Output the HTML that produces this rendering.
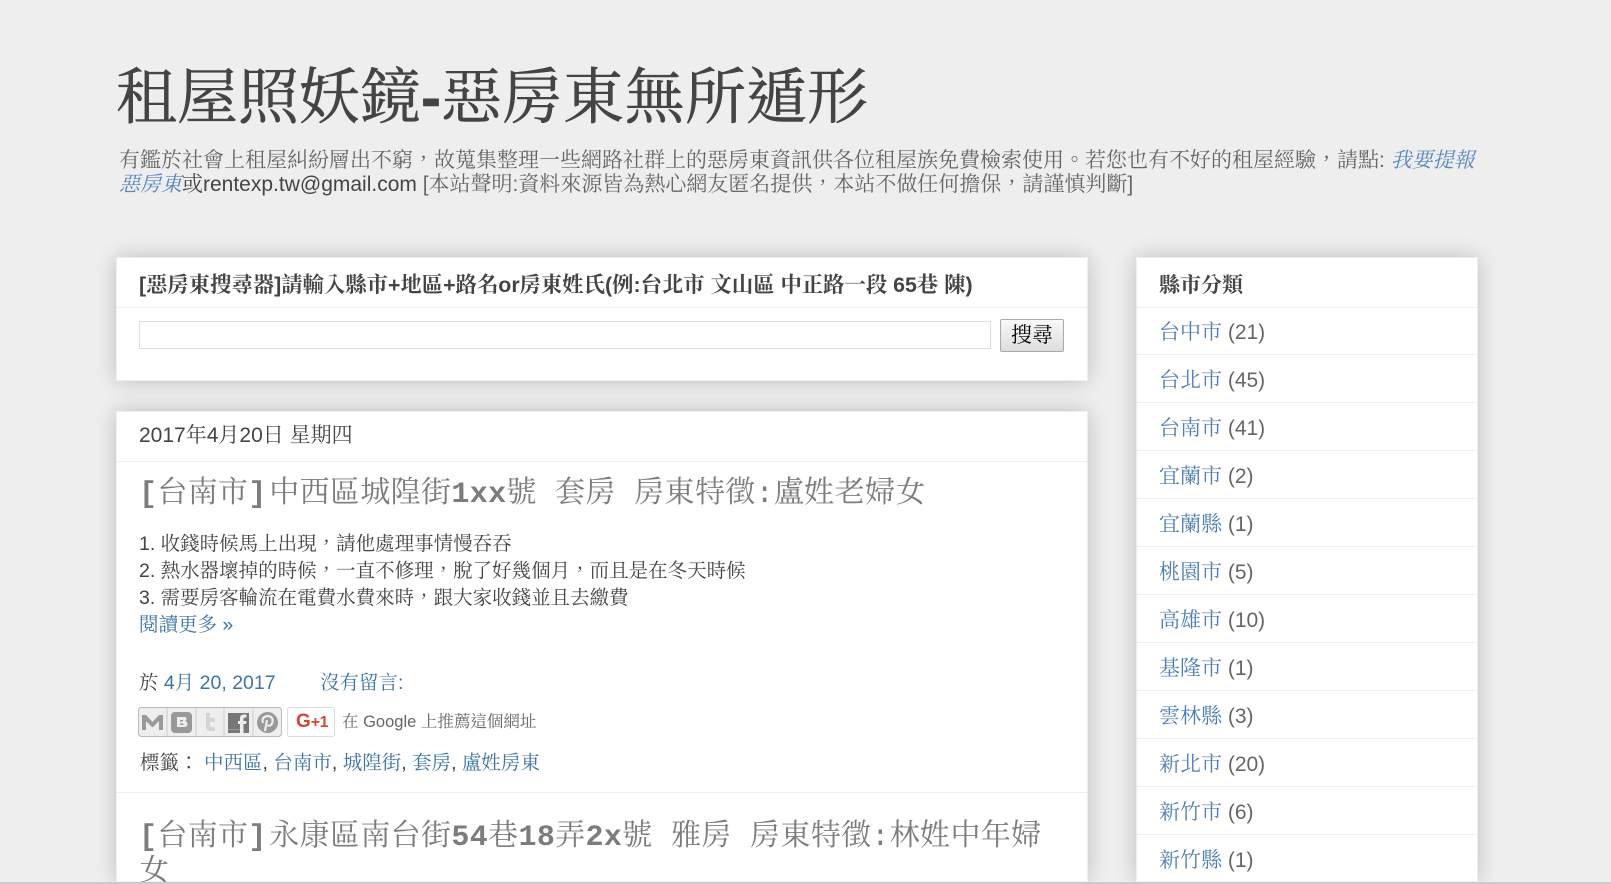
<!DOCTYPE html>
<html lang="zh-Hant"><head><meta charset="utf-8"><title>租屋照妖鏡-惡房東無所遁形</title>
<style>
html,body{margin:0;padding:0;background:#eee;width:1611px;height:884px;overflow:hidden}
#w{width:1611px;height:884px;overflow:hidden;position:relative;font-family:"Liberation Sans","Noto Serif CJK SC",serif;color:#444}
.t{position:absolute;white-space:pre;line-height:30px;height:30px;font-size:19.5px}
.card{position:absolute;background:#fff;box-shadow:0 0 20px rgba(0,0,0,.2);border:1px solid #eee;box-sizing:border-box}
.hr{position:absolute;height:1px;background:#eee}
a{color:#3d74a5;text-decoration:none}
.side{color:#666;font-size:21px}.side a{color:#4f7db5}
.pt{font-family:"Liberation Mono","Noto Serif CJK SC",monospace;font-size:30px;line-height:36px;height:36px;color:#7c7c7c;font-weight:normal;letter-spacing:.35px}
.pt b{font-weight:bold}
.pt i{display:inline-block;width:2.500px}
</style></head><body><div id="w">
<div class="t" style="left:116px;top:57px;height:80px;line-height:80px;font-size:61px;color:#444;-webkit-text-stroke:.5px #444">租屋照妖鏡<b style="font-size:60px">-</b>惡房東無所遁形</div>
<div class="t" style="left:119px;top:149px;height:24px;line-height:24px;color:#666;font-size:21px">有鑑於社會上租屋糾紛層出不窮，故蒐集整理一些網路社群上的惡房東資訊供各位租屋族免費檢索使用。若您也有不好的租屋經驗，請點: <a href="#" style="color:#5a86c0;font-style:italic">我要提報</a></div>
<div class="t" style="left:119px;top:173px;height:24px;line-height:24px;color:#666;font-size:21px"><a href="#" style="color:#5a86c0;font-style:italic">惡房東</a><span style="color:#444">或rentexp.tw@gmail.com</span> [本站聲明:資料來源皆為熱心網友匿名提供，本站不做任何擔保，請謹慎判斷]</div>

<div class="card" style="left:116px;top:257px;width:972px;height:124px"></div>
<div class="hr" style="left:117px;top:307px;width:970px"></div>
<div class="t" style="left:139px;top:270px;font-size:21.350px;font-weight:bold;color:#444">[惡房東搜尋器]請輸入縣市+地區+路名or房東姓氏(例:台北市 文山區 中正路一段 65巷 陳)</div>
<div style="position:absolute;left:139px;top:321px;width:852px;height:28px;box-sizing:border-box;border:1px solid #ddd;background:#fff"></div>
<div style="position:absolute;left:1000px;top:319px;width:64px;height:33px;box-sizing:border-box;border:1px solid #aaa;border-radius:2px;background:linear-gradient(#f8f8f8,#ddd);color:#000;font-size:21px;line-height:31px;text-align:center">搜尋</div>

<div class="card" style="left:116px;top:411px;width:972px;height:471px"></div>
<div class="hr" style="left:117px;top:461px;width:970px"></div>
<div class="t" style="left:139px;top:421px;color:#444;font-size:21px">2017年4月20日 星期四</div>
<div class="t pt" style="left:139px;top:477px"><b>[</b>台南市<b>]</b><i></i>中西區城隍街<b>1xx</b>號 套房 房東特徵:盧姓老婦女</div>
<div class="t" style="left:139px;top:529px">1. 收錢時候馬上出現，請他處理事情慢吞吞</div>
<div class="t" style="left:139px;top:556px">2. 熱水器壞掉的時候，一直不修理，脫了好幾個月，而且是在冬天時候</div>
<div class="t" style="left:139px;top:583px">3. 需要房客輪流在電費水費來時，跟大家收錢並且去繳費</div>
<div class="t" style="left:139px;top:610px"><a href="#">閱讀更多 »</a></div>
<div class="t" style="left:139px;top:668px">於 <a href="#">4月 20, 2017</a></div>
<div class="t" style="left:320px;top:668px"><a href="#">沒有留言:</a></div>

<svg style="position:absolute;left:138px;top:707px" width="198" height="31" viewBox="0 0 198 31">
<rect x=".5" y=".5" width="143" height="29" rx="3" fill="#eee" stroke="#bbb"/>
<path d="M29 1V29M58 1V29M86 1V29M115 1V29" stroke="#ccc" stroke-width="1"/>
<path d="M4 23V8H8L14.500 15 21 8H25V23H21V14L14.500 20.500 8 14V23Z" fill="#999"/>
<rect x="33" y="5" width="21" height="21" rx="4" fill="#999"/><path d="M39 10h7a2 2 0 0 1 1 4 2.500 2.500 0 0 1-1 6h-7Zm3 3v1.500h3v-1.500Zm0 3.500v1.500h3.500v-1.500Z" fill="#eee"/>
<path d="M68 6h4v5h5v4h-5v3q0 3 5 2v4q-9 1.500-9-5Z" fill="#d4d4d4"/>
<rect x="90" y="6" width="21" height="20" fill="#777"/><path d="M102 26V17h-2v-3h2v-3q0-3.500 4-3.500h2.500v3H107q-1.500 0-1.500 1v2.500h3l-.5 3h-2.500V26Z" fill="#eee"/><rect x="90" y="22" width="12" height="1" fill="#999"/>
<circle cx="129.500" cy="15.500" r="10.500" fill="#999"/><path d="M127 24 129 13M125 16q-2-6 4.500-7 6 .5 5 6-1 4.500-5 3.500" fill="none" stroke="#eee" stroke-width="2.200"/>
<rect x="149.500" y=".5" width="47" height="29" rx="2" fill="#fff" stroke="#ddd"/>
</svg>
<div class="t" style="left:296px;top:707px;font-size:19px;font-weight:bold;color:#d14836;line-height:30px;font-family:'Liberation Sans',sans-serif">G<span style="font-size:16px;letter-spacing:-.5px">+1</span></div>
<div class="t" style="left:342px;top:707px;font-size:16.500px;color:#666">在 Google 上推薦這個網址</div>
<div class="t" style="left:140px;top:748px">標籤：</div>
<div class="t" style="left:204px;top:748px"><a href="#">中西區</a>, <a href="#">台南市</a>, <a href="#">城隍街</a>, <a href="#">套房</a>, <a href="#">盧姓房東</a></div>
<div class="hr" style="left:117px;top:792px;width:970px"></div>
<div class="t pt" style="left:139px;top:820px"><b>[</b>台南市<b>]</b><i></i>永康區南台街<b>54</b>巷<b>18</b>弄<b>2x</b>號 雅房 房東特徵:林姓中年婦</div>
<div class="t pt" style="left:139px;top:855px">女</div>

<div class="card" style="left:1136px;top:257px;width:342px;height:625px"></div>
<div class="t" style="left:1159px;top:271px;font-weight:bold;font-size:21px">縣市分類</div>
<div class="hr" style="left:1137px;top:307px;width:340px"></div>
<div class="t side" style="left:1159px;top:318px"><a href="#">台中市</a> (21)</div><div class="hr" style="left:1137px;top:354px;width:340px"></div>
<div class="t side" style="left:1159px;top:366px"><a href="#">台北市</a> (45)</div><div class="hr" style="left:1137px;top:402px;width:340px"></div>
<div class="t side" style="left:1159px;top:414px"><a href="#">台南市</a> (41)</div><div class="hr" style="left:1137px;top:450px;width:340px"></div>
<div class="t side" style="left:1159px;top:462px"><a href="#">宜蘭市</a> (2)</div><div class="hr" style="left:1137px;top:498px;width:340px"></div>
<div class="t side" style="left:1159px;top:510px"><a href="#">宜蘭縣</a> (1)</div><div class="hr" style="left:1137px;top:546px;width:340px"></div>
<div class="t side" style="left:1159px;top:558px"><a href="#">桃園市</a> (5)</div><div class="hr" style="left:1137px;top:594px;width:340px"></div>
<div class="t side" style="left:1159px;top:606px"><a href="#">高雄市</a> (10)</div><div class="hr" style="left:1137px;top:642px;width:340px"></div>
<div class="t side" style="left:1159px;top:654px"><a href="#">基隆市</a> (1)</div><div class="hr" style="left:1137px;top:690px;width:340px"></div>
<div class="t side" style="left:1159px;top:702px"><a href="#">雲林縣</a> (3)</div><div class="hr" style="left:1137px;top:738px;width:340px"></div>
<div class="t side" style="left:1159px;top:750px"><a href="#">新北市</a> (20)</div><div class="hr" style="left:1137px;top:786px;width:340px"></div>
<div class="t side" style="left:1159px;top:798px"><a href="#">新竹市</a> (6)</div><div class="hr" style="left:1137px;top:834px;width:340px"></div>
<div class="t side" style="left:1159px;top:846px"><a href="#">新竹縣</a> (1)</div>
<div style="position:absolute;left:0;top:882px;width:1611px;height:2px;background:#ccc"></div>
</div></body></html>
